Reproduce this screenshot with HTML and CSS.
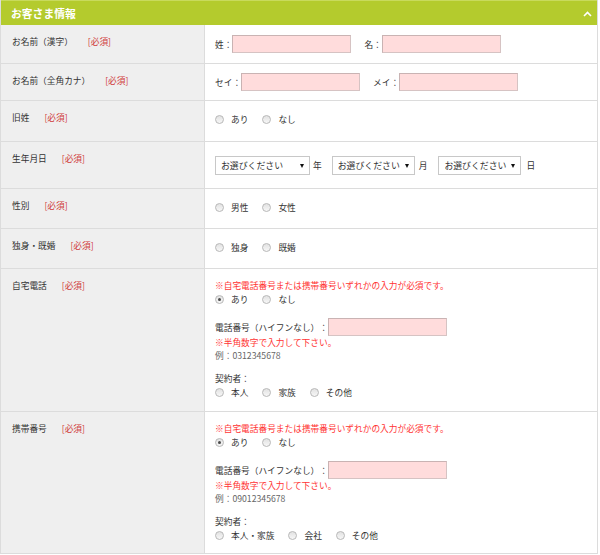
FILE: index.html
```html
<!DOCTYPE html>
<html lang="ja">
<head>
<meta charset="utf-8">
<title>お客さま情報</title>
<link rel="stylesheet" href="styles.css">
</head>
<body>
<div class="panel">
  <div class="panel-head">
    <span class="panel-title">お客さま情報</span>
    <svg class="chev" width="9" height="6" viewBox="0 0 9 6"><polyline points="1,5 4.5,1.5 8,5" fill="none" stroke="#fff" stroke-width="1.6"/></svg>
  </div>

  <div class="row">
    <div class="th"><span class="lbl-name">お名前（漢字）</span><span class="req">[必須]</span></div>
    <div class="td mid h38">
      <span class="pre">姓：</span><span class="inp"></span>
      <span class="pre gap">名：</span><span class="inp"></span>
    </div>
  </div>

  <div class="row">
    <div class="th"><span class="lbl-name">お名前（全角カナ）</span><span class="req">[必須]</span></div>
    <div class="td mid h36">
      <span class="pre">セイ：</span><span class="inp"></span>
      <span class="pre gap">メイ：</span><span class="inp"></span>
    </div>
  </div>

  <div class="row">
    <div class="th"><span class="lbl-name">旧姓</span><span class="req">[必須]</span></div>
    <div class="td mid h40 radios-row">
      <label class="opt"><span class="radio"></span>あり</label>
      <label class="opt"><span class="radio"></span>なし</label>
    </div>
  </div>

  <div class="row">
    <div class="th"><span class="lbl-name">生年月日</span><span class="req">[必須]</span></div>
    <div class="td mid h46">
      <span class="sel sel-wide">お選びください</span><span class="unit">年</span>
      <span class="sel">お選びください</span><span class="unit unit-mid">月</span>
      <span class="sel">お選びください</span><span class="unit unit-last">日</span>
    </div>
  </div>

  <div class="row">
    <div class="th"><span class="lbl-name">性別</span><span class="req">[必須]</span></div>
    <div class="td mid h39 radios-row">
      <label class="opt"><span class="radio"></span>男性</label>
      <label class="opt"><span class="radio"></span>女性</label>
    </div>
  </div>

  <div class="row">
    <div class="th"><span class="lbl-name">独身・既婚</span><span class="req">[必須]</span></div>
    <div class="td mid h39 radios-row">
      <label class="opt"><span class="radio"></span>独身</label>
      <label class="opt"><span class="radio"></span>既婚</label>
    </div>
  </div>

  <div class="row">
    <div class="th"><span class="lbl-name">自宅電話</span><span class="req">[必須]</span></div>
    <div class="td top h142">
      <p class="note">※自宅電話番号または携帯番号いずれかの入力が必須です。</p>
      <div class="opts">
        <label class="opt"><span class="radio on"></span>あり</label>
        <label class="opt"><span class="radio"></span>なし</label>
      </div>
      <div class="tel"><span class="pre">電話番号（ハイフンなし）：</span><span class="inp"></span></div>
      <p class="note">※半角数字で入力して下さい。</p>
      <p class="ex">例：0312345678</p>
      <p class="sub">契約者：</p>
      <div class="opts">
        <label class="opt"><span class="radio"></span>本人</label>
        <label class="opt"><span class="radio"></span>家族</label>
        <label class="opt"><span class="radio"></span>その他</label>
      </div>
    </div>
  </div>

  <div class="row last">
    <div class="th"><span class="lbl-name">携帯番号</span><span class="req">[必須]</span></div>
    <div class="td top h141">
      <p class="note">※自宅電話番号または携帯番号いずれかの入力が必須です。</p>
      <div class="opts">
        <label class="opt"><span class="radio on"></span>あり</label>
        <label class="opt"><span class="radio"></span>なし</label>
      </div>
      <div class="tel"><span class="pre">電話番号（ハイフンなし）：</span><span class="inp"></span></div>
      <p class="note">※半角数字で入力して下さい。</p>
      <p class="ex">例：09012345678</p>
      <p class="sub">契約者：</p>
      <div class="opts">
        <label class="opt"><span class="radio"></span>本人・家族</label>
        <label class="opt"><span class="radio"></span>会社</label>
        <label class="opt"><span class="radio"></span>その他</label>
      </div>
    </div>
  </div>
</div>
</body>
</html>
```

FILE: styles.css
```css
* { box-sizing: border-box; }
body {
  margin: 0;
  background: #fff;
  font-family: "Noto Sans CJK JP", "Noto Sans", sans-serif;
  font-size: 8.7px;
  color: #333;
  text-spacing-trim: space-all;
}
p { margin: 0; }

.panel {
  width: 598px;
  border: 1px solid #dcdcdc;
  border-top: 0;
}
.panel-head {
  height: 25px;
  background: #b4cb2d;
  border-top: 1px solid #c8da5c;
  display: flex;
  align-items: center;
  justify-content: space-between;
  padding: 0 5px 0 10px;
}
.panel-title {
  color: #fff;
  font-weight: bold;
  font-size: 10.8px;
}
.chev { display: block; margin-top: 1px; }

.row {
  display: flex;
  border-bottom: 1px solid #dcdcdc;
}
.row.last { border-bottom: 0; }

.th {
  width: 204px;
  flex: none;
  background: #efefef;
  border-right: 1px solid #dcdcdc;
  padding: 10px 0 0 11px;
  line-height: 13px;
  display: flex;
  align-items: flex-start;
}
.lbl-name { color: #333; }
.req { color: #d03a3a; margin-left: 15px; }

.td {
  flex: 1;
  padding: 0 10px;
  line-height: 13px;
}
.td.mid { display: flex; align-items: center; }
.td.radios-row { padding-bottom: 3px; }
.td.top { padding-top: 10px; }
.h36 { height: 36px; }
.h38 { height: 38px; }
.h39 { height: 39px; }
.h40 { height: 40px; }
.h46 { height: 46px; }
.h142 { height: 142px; }
.h141 { height: 141px; }

.pre { white-space: nowrap; }
.pre.gap { margin-left: 13px; }
.inp {
  display: inline-block;
  width: 119px;
  height: 18px;
  background: #ffdcdc;
  border: 1px solid #d6c3c3;
  border-top-color: #c9b3b3;
  border-left-color: #c9b3b3;
}

.opts { display: flex; align-items: center; height: 14px; }
.opt {
  display: inline-flex;
  align-items: center;
  margin-right: 14px;
  white-space: nowrap;
}
.radio {
  width: 9px;
  height: 9px;
  border-radius: 50%;
  border: 1px solid #b8b8b8;
  background: linear-gradient(#e2e2e2, #f7f7f7);
  margin-right: 7px;
  position: relative;
  flex: none;
}
.radio.on::after {
  content: "";
  position: absolute;
  left: 2px;
  top: 2px;
  width: 3px;
  height: 3px;
  border-radius: 50%;
  background: #4a4a4a;
}

.sel {
  position: relative;
  display: inline-flex;
  align-items: center;
  width: 83px;
  height: 19px;
  border: 1px solid #c8c8c8;
  background: #fff;
  padding-left: 5px;
  font-size: 8.9px;
  white-space: nowrap;
}
.sel-wide { width: 95px; }
.sel::after {
  content: "";
  position: absolute;
  right: 5px;
  top: 7px;
  border-left: 2.5px solid transparent;
  border-right: 2.5px solid transparent;
  border-top: 4px solid #111;
}
.unit { margin: 0 10px 0 3px; }
.unit.unit-mid { margin: 0 11px 0 4px; }
.unit.unit-last { margin: 0 0 0 5px; }

.note { color: #f33; }
.tel {
  display: flex;
  align-items: center;
  margin-top: 12px;
  height: 18px;
}
.ex { color: #666; }
.sub { margin-top: 10px; }
```
